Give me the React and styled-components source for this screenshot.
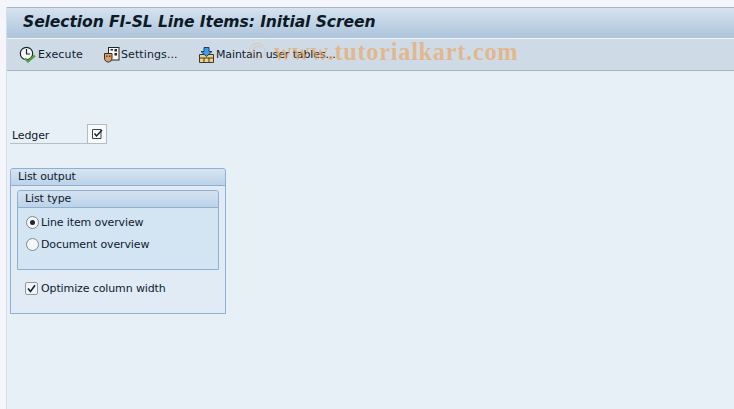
import React from "react";
import styled, { createGlobalStyle } from "styled-components";

const Global = createGlobalStyle`
  html, body { margin: 0; padding: 0; background: #f4f6fb; }
  #root { width: 734px; height: 409px; overflow: hidden; }
`;
const Page = styled.div`
  position: relative; width: 734px; height: 409px; box-sizing: border-box;
  padding: 7px 0 0 6px; overflow: hidden; display: flex;
  font-family: "DejaVu Sans", sans-serif; font-size: 11px; letter-spacing: -0.12px; color: #10202e;
`;
const Window = styled.div`flex: 1; display: flex; flex-direction: column; background: #e8f0f7; border-left: 1px solid #d5dde8;`;
const TitleBar = styled.div`
  height: 31px; box-sizing: border-box; border-top: 1px solid #a9b3c4; padding: 0 0 2px 16px;
  display: flex; align-items: center;
  background: linear-gradient(#d5e2f0, #adc4da);
`;
const Title = styled.h1`
  margin: 0; font: italic 700 15.6px "DejaVu Sans", sans-serif; letter-spacing: -0.1px; color: #0c1a26;
`;
const Toolbar = styled.div`
  height: 33px; box-sizing: border-box; border-top: 1px solid #f0f5fa; border-bottom: 1px solid #a9b5c6;
  background: #cedbe7; display: flex; align-items: center; padding-left: 12px;
`;
const ToolButton = styled.div`
  display: flex; align-items: center; gap: ${p => p.$gap}px; width: ${p => p.$w}px;
  letter-spacing: ${p => p.$track}px; white-space: nowrap;
`;
const Content = styled.div`flex: 1; padding: 53px 0 0 3px; display: flex; flex-direction: column; align-items: flex-start;`;
const LedgerRow = styled.div`display: flex; align-items: flex-end; height: 20px;`;
const LedgerLabel = styled.div`width: 77px; height: 16px; box-sizing: border-box; padding-left: 2px; line-height: 15px; border-bottom: 1px solid #b4bfca;`;
const LedgerBox = styled.div`
  width: 20px; height: 20px; box-sizing: border-box; background: #f8fafc; border: 1px solid #b2bcc7;
  display: flex; align-items: center; justify-content: center;
`;
const Group = styled.div`
  margin-top: 24px; width: 216px; height: 146px; box-sizing: border-box; background: #e0ebf5;
  border: 1px solid #8fb0d0; border-radius: 3px 3px 0 0;
`;
const GroupHead = styled.div`
  height: 17px; padding-left: 7px; line-height: 16px; box-sizing: border-box;
  background: linear-gradient(#d7e5f2, #bcd2e8); border-bottom: 1px solid #8fb0d0; border-radius: 3px 3px 0 0;
`;
const Inner = styled.div`
  margin: 4px 6px 0 6px; height: 80px; box-sizing: border-box; background: #d3e4f3;
  border: 1px solid #8fb0d0; border-radius: 3px 3px 0 0;
`;
const InnerHead = styled.div`
  height: 17px; padding-left: 7px; line-height: 16px; box-sizing: border-box;
  background: linear-gradient(#d3e2f0, #bed3e8); border-bottom: 1px solid #8fb0d0; border-radius: 3px 3px 0 0;
`;
const RadioList = styled.div`padding: 6px 0 0 8px; display: flex; flex-direction: column; gap: 6px;`;
const RadioRow = styled.div`display: flex; align-items: center; height: 16px; gap: 2px;`;
const Radio = styled.span`
  width: 13px; height: 13px; border-radius: 50%; box-sizing: border-box; border: 1px solid #7d8a97;
  background: #f4f6f8; display: flex; align-items: center; justify-content: center;
  &::after { content: ""; width: 5px; height: 5px; border-radius: 50%; background: ${p => p.$on ? "#1c2733" : "transparent"}; }
`;
const CheckRow = styled.div`display: flex; align-items: center; gap: 3px; margin: 10px 0 0 14px; height: 16px;`;
const CheckBox = styled.span`
  width: 13px; height: 13px; box-sizing: border-box; border: 1px solid #8d98a4; border-radius: 2px;
  background: #f2f5f8; display: flex; align-items: center; justify-content: center;
`;
const Watermark = styled.div`
  position: absolute; left: 248px; top: 38px; font: 700 24.4px "Liberation Serif", serif; letter-spacing: 0.7px;
  color: rgba(240, 160, 80, 0.6); white-space: nowrap; pointer-events: none;
`;
const WatermarkMark = styled.span`font-weight: 400; color: rgba(240, 160, 80, 0.3);`;

const ExecuteIcon = () => (
  <svg width="18" height="18" viewBox="0 0 18 18">
    <circle cx="7.5" cy="7.5" r="6.2" fill="#f6f8f8" stroke="#1c2530" strokeWidth="1.2" />
    <path d="M7.5 3V8H11" fill="none" stroke="#1c2530" strokeWidth="1.2" />
    <path d="M6 12.5L9 15.5L16 9.5" fill="none" stroke="#4f9f3a" strokeWidth="2.2" />
  </svg>
);
const SettingsIcon = () => (
  <svg width="17" height="17" viewBox="0 0 17 17">
    <rect x="5.5" y="1.5" width="10.5" height="12.5" fill="#f7f8f8" stroke="#20262c" />
    <rect x="11.5" y="3" width="2.5" height="2.5" fill="#20262c" />
    <rect x="11.5" y="7" width="2.5" height="2.5" fill="#20262c" />
    <rect x="7.5" y="3" width="2.5" height="1.5" fill="#20262c" />
    <path d="M1.5 7.5H9V12C9 14.5 7.3 16 5.2 16C3.1 16 1.5 14.5 1.5 12Z" fill="#dba26b" stroke="#3b2a1c" />
    <rect x="3.2" y="9.5" width="1.4" height="1.4" fill="#3b2a1c" />
    <rect x="6" y="9.5" width="1.4" height="1.4" fill="#3b2a1c" />
  </svg>
);
const MaintainIcon = () => (
  <svg width="17" height="18" viewBox="0 0 17 18">
    <path d="M1.5 8.5H15.5V16.5H1.5Z" fill="#f2d27e" stroke="#3a3a32" />
    <path d="M1.5 12H15.5M6 12V16.5M11 12V16.5" stroke="#3a3a32" fill="none" />
    <path d="M6 1.5H11V5.5H14L8.5 10.5L3 5.5H6Z" fill="#3f9fe6" stroke="#1d3f66" />
  </svg>
);
const LedgerCheck = () => (
  <svg width="12" height="12" viewBox="0 0 12 12">
    <path d="M1.5 1.5H10V10.5H1.5Z" fill="none" stroke="#39424c" />
    <path d="M3.5 5.5L5.5 8L11 2" fill="none" stroke="#141c24" strokeWidth="1.4" />
  </svg>
);
const Tick = () => (
  <svg width="9" height="9" viewBox="0 0 9 9">
    <path d="M1 4.5L3.5 7.5L8 1.2" fill="none" stroke="#17202a" strokeWidth="1.6" />
  </svg>
);

export default function App() {
  return (
    <Page>
      <Global />
      <Window>
        <TitleBar><Title>Selection FI-SL Line Items: Initial Screen</Title></TitleBar>
        <Toolbar>
          <ToolButton $w={84} $gap={1} $track={0.15}><ExecuteIcon />Execute</ToolButton>
          <ToolButton $w={95} $gap={1} $track={0.1}><SettingsIcon />Settings...</ToolButton>
          <ToolButton $w={140} $gap={1} $track={-0.12}><MaintainIcon />Maintain user tables...</ToolButton>
        </Toolbar>
        <Content>
          <LedgerRow>
            <LedgerLabel>Ledger</LedgerLabel>
            <LedgerBox><LedgerCheck /></LedgerBox>
          </LedgerRow>
          <Group>
            <GroupHead>List output</GroupHead>
            <Inner>
              <InnerHead>List type</InnerHead>
              <RadioList>
                <RadioRow><Radio $on />Line item overview</RadioRow>
                <RadioRow><Radio />Document overview</RadioRow>
              </RadioList>
            </Inner>
            <CheckRow><CheckBox><Tick /></CheckBox>Optimize column width</CheckRow>
          </Group>
        </Content>
      </Window>
      <Watermark><WatermarkMark>©</WatermarkMark> www.tutorialkart.com</Watermark>
    </Page>
  );
}
